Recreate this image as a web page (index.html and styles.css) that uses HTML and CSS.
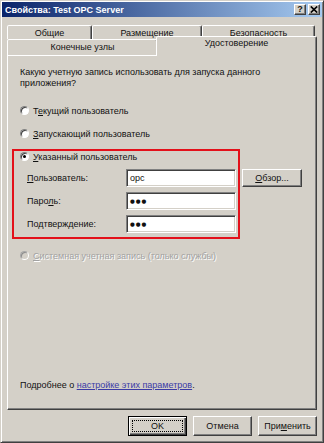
FILE: index.html
```
<!DOCTYPE html>
<html lang="ru">
<head>
<meta charset="utf-8">
<title>Свойства: Test OPC Server</title>
<link rel="stylesheet" href="styles.css">
</head>
<body>
<div class="window">
  <div class="titlebar">
    <span class="title">Свойства: Test OPC Server</span>
    <div class="title-buttons">
      <span class="tbtn">?</span>
      <span class="tbtn"><svg width="8" height="7" viewBox="0 0 8 7"><path d="M0.8 0.5 L7.2 6.5 M7.2 0.5 L0.8 6.5" stroke="#000" stroke-width="1.7"/></svg></span>
    </div>
  </div>
  <div class="content">
    <div class="tabs">
      <div class="tab-row back">
        <div class="tab tab-general">Общие</div>
        <div class="tab tab-location">Размещение</div>
        <div class="tab tab-security">Безопасность</div>
      </div>
      <div class="tab-row front">
        <div class="tab tab-endpoints">Конечные узлы</div>
        <div class="tab tab-identity selected">Удостоверение</div>
      </div>
    </div>
    <div class="panel">
      <p class="question">Какую учетную запись использовать для запуска данного<br>приложения?</p>
      <div class="radio-row r-current"><span class="radio"></span><span>Т<u>е</u>кущий пользователь</span></div>
      <div class="radio-row r-launch"><span class="radio"></span><span><u>З</u>апускающий пользователь</span></div>
      <div class="radio-row r-user"><span class="radio checked"></span><span><u>У</u>казанный пользователь</span></div>
      <div class="fields">
        <div class="field-row"><span class="label"><u>П</u>ользователь:</span><span class="input">opc</span><span class="btn browse"><u>О</u>бзор...</span></div>
        <div class="field-row"><span class="label">Паро<u>л</u>ь:</span><span class="input pass">●●●</span></div>
        <div class="field-row"><span class="label">Подтверждение:</span><span class="input pass">●●●</span></div>
      </div>
      <div class="radio-row r-system disabled"><span class="radio"></span><span><u>С</u>истемная учетная запись (только службы)</span></div>
      <p class="more">Подробнее о <a href="#" class="link">настройке этих параметров</a>.</p>
      <div class="highlight"></div>
    </div>
    <div class="buttons">
      <span class="btn dlg default"><span class="focus">OK</span></span>
      <span class="btn dlg">Отмена</span>
      <span class="btn dlg">При<u>м</u>енить</span>
    </div>
  </div>
</div>
</body>
</html>
```
FILE: styles.css
```
html, body {
  margin: 0;
  padding: 0;
}
body {
  width: 324px;
  height: 443px;
  overflow: hidden;
  background: #d4d0c8;
  font-family: "Liberation Sans", Arial, sans-serif;
  font-size: 9px;
  color: #111;
}
u {
  text-decoration: underline;
  text-underline-offset: 1px;
}
.window {
  box-sizing: border-box;
  width: 324px;
  height: 443px;
  background: #d4d0c8;
  border: 1px solid;
  border-color: #d4d0c8 #404040 #404040 #d4d0c8;
  box-shadow: inset 1px 1px #fff, inset -1px -1px #808080;
  padding: 1px;
  display: flex;
  flex-direction: column;
}
.titlebar {
  height: 15px;
  display: flex;
  align-items: center;
  justify-content: space-between;
  background: linear-gradient(to right, #0a246a, #a6caf0);
  padding: 0 2px 0 3px;
}
.title {
  color: #fff;
  font-weight: bold;
  font-size: 9px;
}
.title-buttons {
  display: flex;
  gap: 2px;
}
.tbtn {
  box-sizing: border-box;
  width: 12px;
  height: 11px;
  background: #d4d0c8;
  border: 1px solid;
  border-color: #fff #404040 #404040 #fff;
  box-shadow: inset -1px -1px #808080;
  display: flex;
  align-items: center;
  justify-content: center;
  font-weight: bold;
  font-size: 9px;
  line-height: 1;
}
.content {
  flex: 1;
  padding: 8px 5px 0 5px;
  display: flex;
  flex-direction: column;
}
.tab-row {
  display: flex;
}
.back {
  height: 14px;
}
.front {
  height: 16px;
}
.tab {
  box-sizing: border-box;
  height: 100%;
  border: 1px solid;
  border-bottom: none;
  border-color: #fff #404040 transparent #fff;
  box-shadow: inset -1px 0 #808080;
  border-radius: 2px 2px 0 0;
  text-align: center;
  line-height: 11px;
  padding-top: 2px;
  background: #d4d0c8;
}
.tab-general { width: 85px; }
.tab-location { width: 110px; }
.tab-security { width: 113px; }
.tab-endpoints { width: 151px; }
.tab-identity { width: 161px; }
.selected {
  position: relative;
  z-index: 2;
  height: 20px;
  margin-top: -3px;
  margin-left: -2px;
  padding-top: 1px;
}
.panel {
  position: relative;
  box-sizing: border-box;
  height: 355px;
  border: 1px solid;
  border-color: #fff #404040 #404040 #fff;
  box-shadow: inset -1px -1px #808080;
  padding: 11px 12px 18px 12px;
  display: flex;
  flex-direction: column;
}
.question {
  margin: 0;
  line-height: 11px;
}
.radio-row {
  display: flex;
  align-items: center;
  height: 13px;
  gap: 4px;
}
.r-current { margin-top: 15px; }
.r-launch { margin-top: 10px; }
.r-user { margin-top: 10px; }
.r-system { margin-top: 16px; }
.radio {
  box-sizing: border-box;
  flex: none;
  position: relative;
  width: 9px;
  height: 9px;
  border-radius: 50%;
  background: #fff;
  border: 1px solid;
  border-color: #808080 #fff #fff #808080;
  box-shadow: inset 1px 1px #404040;
}
.radio.checked::after {
  content: "";
  position: absolute;
  left: 2px;
  top: 2px;
  width: 3px;
  height: 3px;
  border-radius: 50%;
  background: #000;
}
.disabled {
  color: #a2a2a2;
  text-shadow: 1px 1px #fff;
}
.disabled .radio {
  background: #d4d0c8;
  border-color: #a8a8a8 #fff #fff #a8a8a8;
  box-shadow: inset 1px 1px #8c8c8c;
}
.fields {
  margin-top: 6px;
  display: flex;
  flex-direction: column;
  gap: 5px;
}
.field-row {
  display: flex;
  align-items: center;
  height: 18px;
  padding-left: 7px;
}
.label {
  width: 99px;
}
.input {
  box-sizing: border-box;
  width: 110px;
  height: 18px;
  background: #fff;
  border: 1px solid;
  border-color: #808080 #fff #fff #808080;
  box-shadow: inset 1px 1px #404040, inset -1px -1px #d4d0c8;
  padding-left: 3px;
  line-height: 16px;
}
.pass {
  font-family: "DejaVu Sans", sans-serif;
  font-size: 5.5px;
  letter-spacing: 1px;
}
.btn {
  box-sizing: border-box;
  display: flex;
  align-items: center;
  justify-content: center;
  background: #d4d0c8;
  border: 1px solid;
  border-color: #fff #404040 #404040 #fff;
  box-shadow: inset -1px -1px #808080;
}
.browse {
  margin-left: 6px;
  width: 60px;
  height: 18px;
}
.more {
  margin: auto 0 0 0;
  line-height: 11px;
}
.link {
  color: #3b3ba6;
  text-decoration: underline;
}
.highlight {
  position: absolute;
  left: 4px;
  top: 93px;
  width: 228px;
  height: 90px;
  box-sizing: border-box;
  border: 2px solid #e3101a;
  pointer-events: none;
}
.buttons {
  display: flex;
  justify-content: flex-end;
  gap: 6px;
  margin-top: 6px;
}
.dlg {
  width: 59px;
  height: 20px;
}
.default {
  border-color: #000;
  box-shadow: inset 1px 1px #fff, inset -1px -1px #404040, inset -2px -2px #808080;
}
.focus {
  box-sizing: border-box;
  width: 51px;
  height: 12px;
  border: 1px dotted #000;
  display: flex;
  align-items: center;
  justify-content: center;
}
```
